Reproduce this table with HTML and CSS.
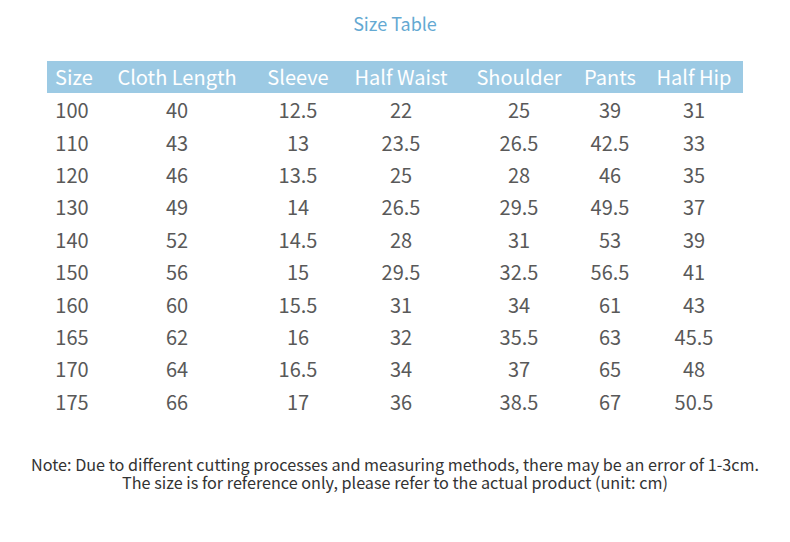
FILE: index.html
```html
<!DOCTYPE html>
<html>
<head>
<meta charset="utf-8">
<link rel="stylesheet" href="styles.css">
</head>
<body>
<div class="page">
  <h1 class="title">Size Table</h1>
  <table class="sizes">
    <colgroup>
      <col class="c1"><col class="c2"><col class="c3"><col class="c4"><col class="c5"><col class="c6"><col class="c7">
    </colgroup>
    <thead>
      <tr><th>Size</th><th>Cloth Length</th><th>Sleeve</th><th>Half Waist</th><th>Shoulder</th><th>Pants</th><th>Half Hip</th></tr>
    </thead>
    <tbody>
      <tr><td>100</td><td>40</td><td>12.5</td><td>22</td><td>25</td><td>39</td><td>31</td></tr>
      <tr><td>110</td><td>43</td><td>13</td><td>23.5</td><td>26.5</td><td>42.5</td><td>33</td></tr>
      <tr><td>120</td><td>46</td><td>13.5</td><td>25</td><td>28</td><td>46</td><td>35</td></tr>
      <tr><td>130</td><td>49</td><td>14</td><td>26.5</td><td>29.5</td><td>49.5</td><td>37</td></tr>
      <tr><td>140</td><td>52</td><td>14.5</td><td>28</td><td>31</td><td>53</td><td>39</td></tr>
      <tr><td>150</td><td>56</td><td>15</td><td>29.5</td><td>32.5</td><td>56.5</td><td>41</td></tr>
      <tr><td>160</td><td>60</td><td>15.5</td><td>31</td><td>34</td><td>61</td><td>43</td></tr>
      <tr><td>165</td><td>62</td><td>16</td><td>32</td><td>35.5</td><td>63</td><td>45.5</td></tr>
      <tr><td>170</td><td>64</td><td>16.5</td><td>34</td><td>37</td><td>65</td><td>48</td></tr>
      <tr><td>175</td><td>66</td><td>17</td><td>36</td><td>38.5</td><td>67</td><td>50.5</td></tr>
    </tbody>
  </table>
  <p class="note">Note: Due to different cutting processes and measuring methods, there may be an error of 1-3cm.<br>The size is for reference only, please refer to the actual product (unit: cm)</p>
</div>
</body>
</html>
```
FILE: styles.css
```css
html, body {
  margin: 0;
  padding: 0;
  background: #ffffff;
}
body {
  font-family: "Noto Sans CJK SC", "Noto Sans", sans-serif;
  width: 790px;
  height: 542px;
  overflow: hidden;
}
.page {
  display: flex;
  flex-direction: column;
  align-items: center;
  padding-top: 10px;
}
.title {
  margin: 0;
  font-size: 18px;
  font-weight: 400;
  line-height: 26px;
  color: #64a9d2;
}
.sizes {
  margin-top: 25px;
  width: 696px;
  border-collapse: collapse;
  table-layout: fixed;
}
.c1 { width: 50px; }
.c2 { width: 160px; }
.c3 { width: 82px; }
.c4 { width: 124px; }
.c5 { width: 112px; }
.c6 { width: 70px; }
.c7 { width: 98px; }
.sizes th {
  background: #9ccae4;
  color: #ffffff;
  font-weight: 400;
  font-size: 20px;
  height: 32px;
  padding: 0;
  line-height: 32px;
  white-space: nowrap;
  text-align: center;
}
.sizes th:first-child {
  text-align: left;
  padding-left: 8px;
}
.sizes td {
  color: #595959;
  font-size: 20px;
  height: 32.4px;
  padding: 0;
  text-align: center;
  line-height: 32px;
}
.sizes tbody tr:first-child td {
  padding-top: 1px;
}
.note {
  margin: 37px 0 0;
  font-size: 16.2px;
  line-height: 18.5px;
  color: #333333;
  text-align: center;
  white-space: nowrap;
}
```
